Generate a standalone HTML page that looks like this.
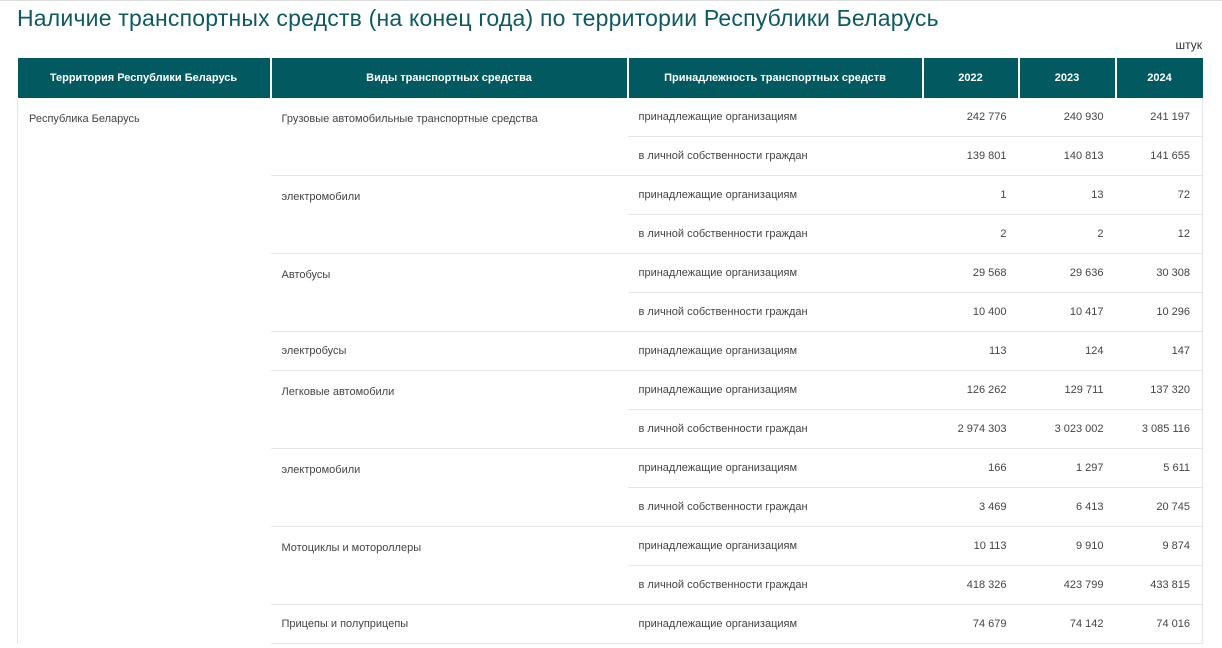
<!DOCTYPE html><html><head><meta charset="utf-8"><style>
body{margin:0;background:#fff;font-family:"Liberation Sans",Arial,sans-serif;width:1222px;height:648px;overflow:hidden;position:relative}
.top{position:absolute;left:0;top:0;width:1222px;height:1px;background:#ddd}
h1{position:absolute;left:17px;top:5px;margin:0;font-weight:normal;font-size:23px;color:#0d5a62;letter-spacing:0.2px}
.u{position:absolute;right:20px;top:38px;font-size:12px;color:#333}
table{position:absolute;left:17px;top:58px;border-collapse:collapse;table-layout:fixed;width:1185px;font-size:11px;color:#444}
th{background:#025a60;color:#fff;font-weight:bold;height:40px;border-right:2px solid #fff;font-size:11px;padding:0}
th:last-child{border-right:0}
td{height:38px;border-bottom:1px solid #e6e6e6;padding:0 11px;vertical-align:middle}
td.n{text-align:right;padding-right:12px}
td.r{vertical-align:top;padding-top:15px;border-bottom:0;border-left:1px solid #e6e6e6}
td.g{vertical-align:top;padding-top:15px}
tr td:last-child{border-right:1px solid #e6e6e6}
</style></head><body>
<div class="top"></div>
<h1>Наличие транспортных средств (на конец года) по территории Республики Беларусь</h1>
<div class="u">штук</div>
<table>
<colgroup><col style="width:253px"><col style="width:357px"><col style="width:295px"><col style="width:96px"><col style="width:97px"><col style="width:87px"></colgroup>
<tr><th>Территория Республики Беларусь</th><th>Виды транспортных средства</th><th>Принадлежность транспортных средств</th><th>2022</th><th>2023</th><th>2024</th></tr>
<tr><td class="r" rowspan="14">Республика Беларусь</td><td class="g" rowspan="2">Грузовые автомобильные транспортные средства</td><td>принадлежащие организациям</td><td class="n">242 776</td><td class="n">240 930</td><td class="n">241 197</td></tr>
<tr><td>в личной собственности граждан</td><td class="n">139 801</td><td class="n">140 813</td><td class="n">141 655</td></tr>
<tr><td class="g" rowspan="2">электромобили</td><td>принадлежащие организациям</td><td class="n">1</td><td class="n">13</td><td class="n">72</td></tr>
<tr><td>в личной собственности граждан</td><td class="n">2</td><td class="n">2</td><td class="n">12</td></tr>
<tr><td class="g" rowspan="2">Автобусы</td><td>принадлежащие организациям</td><td class="n">29 568</td><td class="n">29 636</td><td class="n">30 308</td></tr>
<tr><td>в личной собственности граждан</td><td class="n">10 400</td><td class="n">10 417</td><td class="n">10 296</td></tr>
<tr><td class="g" style="vertical-align:middle;padding-top:0">электробусы</td><td>принадлежащие организациям</td><td class="n">113</td><td class="n">124</td><td class="n">147</td></tr>
<tr><td class="g" rowspan="2">Легковые автомобили</td><td>принадлежащие организациям</td><td class="n">126 262</td><td class="n">129 711</td><td class="n">137 320</td></tr>
<tr><td>в личной собственности граждан</td><td class="n">2 974 303</td><td class="n">3 023 002</td><td class="n">3 085 116</td></tr>
<tr><td class="g" rowspan="2">электромобили</td><td>принадлежащие организациям</td><td class="n">166</td><td class="n">1 297</td><td class="n">5 611</td></tr>
<tr><td>в личной собственности граждан</td><td class="n">3 469</td><td class="n">6 413</td><td class="n">20 745</td></tr>
<tr><td class="g" rowspan="2">Мотоциклы и мотороллеры</td><td>принадлежащие организациям</td><td class="n">10 113</td><td class="n">9 910</td><td class="n">9 874</td></tr>
<tr><td>в личной собственности граждан</td><td class="n">418 326</td><td class="n">423 799</td><td class="n">433 815</td></tr>
<tr><td class="g" style="vertical-align:middle;padding-top:0">Прицепы и полуприцепы</td><td>принадлежащие организациям</td><td class="n">74 679</td><td class="n">74 142</td><td class="n">74 016</td></tr>
</table>
</body></html>
